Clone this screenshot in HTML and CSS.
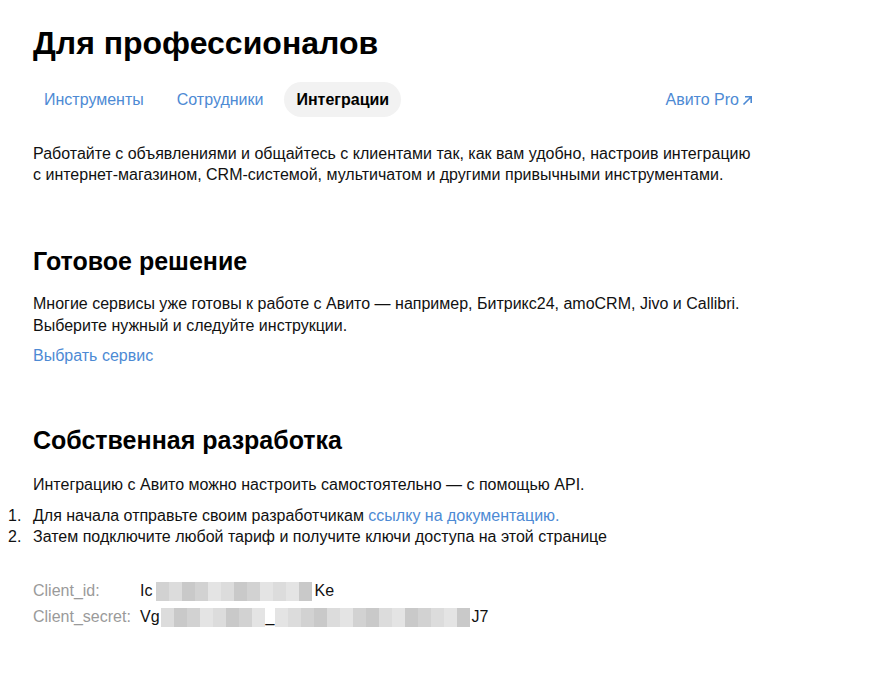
FILE: index.html
```html
<!DOCTYPE html>
<html lang="ru">
<head>
<meta charset="utf-8">
<title>Для профессионалов</title>
<link rel="stylesheet" href="styles.css">
</head>
<body>
<main class="page">
  <h1 class="title">Для профессионалов</h1>
  <nav class="tabs">
    <a class="tab">Инструменты</a>
    <a class="tab">Сотрудники</a>
    <a class="tab tab-active">Интеграции</a>
    <a class="tab tab-pro">Авито Pro<svg class="arrow" width="11" height="11" viewBox="0 0 11 11"><path d="M1.5 9.5 L9 2 M3 1.8 H9.2 V8" fill="none" stroke="currentColor" stroke-width="1.6"/></svg></a>
  </nav>
  <p class="intro">Работайте с объявлениями и общайтесь с клиентами так, как вам удобно, настроив интеграцию<br>с интернет-магазином, CRM-системой, мультичатом и другими привычными инструментами.</p>

  <section class="block">
    <h2 class="h2">Готовое решение</h2>
    <p class="text">Многие сервисы уже готовы к работе с Авито — например, Битрикс24, amoCRM, Jivo и Callibri.<br>Выберите нужный и следуйте инструкции.</p>
    <a class="link link-block">Выбрать сервис</a>
  </section>

  <section class="block own">
    <h2 class="h2">Собственная разработка</h2>
    <p class="text lead">Интеграцию с Авито можно настроить самостоятельно — с помощью API.</p>
    <ol class="steps">
      <li class="step"><span class="num">1.</span><span>Для начала отправьте своим разработчикам <a class="link">ссылку на документацию.</a></span></li>
      <li class="step"><span class="num">2.</span><span>Затем подключите любой тариф и получите ключи доступа на этой странице</span></li>
    </ol>
    <div class="keys">
      <div class="key"><span class="key-label">Client_id:</span><span class="key-val">Ic<span class="blur blur-id"><i class="b1"></i><i class="b2"></i><i class="b3"></i><i class="b1"></i><i class="b4"></i><i class="b2"></i><i class="b3"></i><i class="b1"></i><i class="b4"></i><i class="b2"></i><i class="b4"></i><i class="b3"></i></span>Ke</span></div>
      <div class="key"><span class="key-label">Client_secret:</span><span class="key-val">Vg<span class="blur"><i class="b2"></i><i class="b3"></i><i class="b1"></i><i class="b4"></i><i class="b2"></i><i class="b3"></i><i class="b1"></i><i class="b4"></i></span>_<span class="blur"><i class="b4"></i><i class="b2"></i><i class="b1"></i><i class="b3"></i><i class="b2"></i><i class="b4"></i><i class="b1"></i><i class="b3"></i><i class="b2"></i><i class="b4"></i><i class="b3"></i><i class="b1"></i><i class="b2"></i><i class="b4"></i><i class="b3"></i></span>J7</span></div>
    </div>
  </section>
</main>
</body>
</html>
```
FILE: styles.css
```css
* { box-sizing: border-box; }
body {
  margin: 0;
  background: #fff;
  color: #111;
  font-family: "Liberation Sans", Arial, sans-serif;
  font-size: 16px;
}
.page {
  width: 765px;
  padding: 23px 0 40px 33px;
}
.title {
  margin: 0;
  font-size: 32px;
  line-height: 40px;
  font-weight: 700;
  color: #000;
}
.tabs {
  display: flex;
  align-items: center;
  gap: 9px;
  margin-top: 19px;
  margin-left: -1px;
}
.tab {
  display: flex;
  align-items: center;
  height: 35px;
  padding: 0 12px;
  border-radius: 18px;
  color: #4d8ad4;
  font-size: 16px;
}
.tab-active {
  background: #f2f2f2;
  color: #000;
  font-weight: 700;
  padding: 0 12px;
}
.tab-pro {
  margin-left: auto;
  gap: 3px;
}
.arrow { display: block; margin-top: 1px; }
.intro {
  margin: 26px 0 0;
  line-height: 21px;
}
.block { margin-top: 61px; }
.block.own { margin-top: 58px; }
.h2 {
  margin: 0;
  font-size: 25px;
  line-height: 30px;
  font-weight: 700;
  color: #000;
}
.text {
  margin: 17px 0 0;
  line-height: 22px;
}
.link { color: #4d8ad4; }
.link-block {
  display: block;
  margin-top: 8px;
  line-height: 22px;
}
.own .lead { margin-top: 19px; }
.steps {
  list-style: none;
  margin: 9px 0 0 -25px;
  padding: 0;
}
.step {
  display: flex;
  line-height: 21px;
}
.num { width: 25px; flex: none; }
.keys {
  margin-top: 33px;
  display: flex;
  flex-direction: column;
  gap: 4px;
}
.key {
  display: flex;
  align-items: center;
  line-height: 22px;
}
.key-label {
  width: 107px;
  color: #9a9a9a;
}
.key-val {
  display: flex;
  align-items: center;
  color: #111;
}
.blur {
  display: flex;
  height: 19px;
  margin: 0 1px;
}
.blur-id { margin: 0 2px 0 4px; }
.blur i { display: block; width: 13px; height: 19px; }
.b1 { background: #d2d2d2; }
.b2 { background: #dcdcdc; }
.b3 { background: #c9c9c9; }
.b4 { background: #e4e4e4; }
```
